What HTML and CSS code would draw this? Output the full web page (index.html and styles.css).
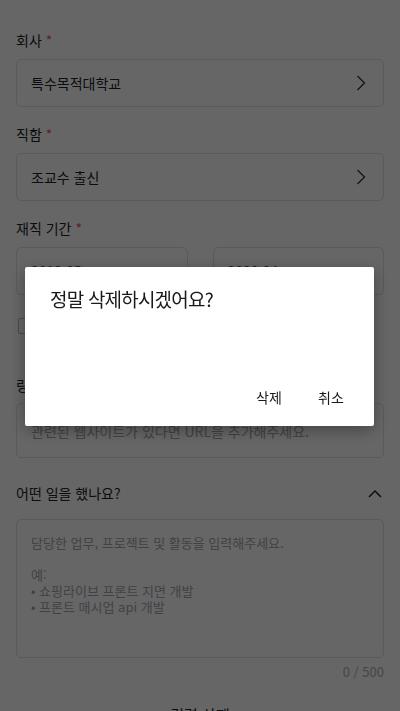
FILE: index.html
```html
<!DOCTYPE html>
<html lang="ko">
<head>
  <meta charset="UTF-8">
  <title>경력 편집</title>
  <link rel="stylesheet" href="styles.css">
</head>
<body>
  <!-- 경력 입력 폼 -->
  <div class="page">
    <div class="field">
      <div class="label">회사 <span class="req">*</span></div>
      <div class="select-box">
        <span>특수목적대학교</span>
        <svg class="chev" width="10" height="16" viewBox="0 0 10 16"><path d="M1.5 1 L8.5 8 L1.5 15" fill="none" stroke="#333" stroke-width="1.3"/></svg>
      </div>
    </div>

    <div class="field">
      <div class="label">직함 <span class="req">*</span></div>
      <div class="select-box">
        <span>조교수 출신</span>
        <svg class="chev" width="10" height="16" viewBox="0 0 10 16"><path d="M1.5 1 L8.5 8 L1.5 15" fill="none" stroke="#333" stroke-width="1.3"/></svg>
      </div>
    </div>

    <div class="field">
      <div class="label">재직 기간 <span class="req">*</span></div>
      <div class="date-row">
        <div class="date-box">2019.05</div>
        <div class="date-box">2020.04</div>
      </div>
      <div class="check-row">
        <span class="checkbox"></span>
        <span>재직 중</span>
      </div>
    </div>

    <div class="field link-field">
      <div class="label">링크</div>
      <div class="link-box">관련된 웹사이트가 있다면 URL을 추가해주세요.</div>
    </div>

    <div class="section-head">
      <span>어떤 일을 했나요?</span>
      <svg width="14" height="9" viewBox="0 0 14 9"><path d="M1 8 L7 2 L13 8" fill="none" stroke="#222" stroke-width="1.5"/></svg>
    </div>
    <div class="textarea">
      <p>담당한 업무, 프로젝트 및 활동을 입력해주세요.</p>
      <p class="blank">&nbsp;</p>
      <p>예:</p>
      <p>• 쇼핑라이브 프론트 지면 개발</p>
      <p>• 프론트 매시업 api 개발</p>
    </div>
    <div class="counter">0 / 500</div>

    <div class="delete-link">경력 삭제</div>
  </div>

  <!-- 삭제 확인 다이얼로그 -->
  <div class="dim">
    <div class="dialog">
      <div class="dialog-title">정말 삭제하시겠어요?</div>
      <div class="dialog-actions">
        <button class="dialog-btn">삭제</button>
        <button class="dialog-btn">취소</button>
      </div>
    </div>
  </div>
</body>
</html>
```

FILE: styles.css
```css
/* 기본 */
body {
  margin: 0;
  font-family: "Noto Sans CJK KR", "Noto Sans", sans-serif;
  background-color: #fff;
  color: #222;
}
.page {
  padding: 30px 16px 40px;
}
.field {
  margin-bottom: 17px;
}
.label {
  font-size: 14px;
  line-height: 20px;
  margin-bottom: 9px;
}
.req {
  color: #ee5555;
}
/* 선택 박스 */
.select-box {
  height: 48px;
  box-sizing: border-box;
  border: 1px solid #e1e1e1;
  border-radius: 5px;
  display: flex;
  align-items: center;
  justify-content: space-between;
  padding: 0 17px 0 14px;
  font-size: 14px;
}
/* 기간 */
.date-row {
  display: grid;
  grid-template-columns: 1fr 1fr;
  gap: 25px;
}
.date-box {
  height: 48px;
  box-sizing: border-box;
  border: 1px solid #e1e1e1;
  border-radius: 5px;
  display: flex;
  align-items: center;
  padding-left: 14px;
  font-size: 14px;
  color: #555;
}
.check-row {
  display: flex;
  align-items: center;
  gap: 8px;
  margin-top: 21px;
  padding-left: 2px;
  font-size: 14px;
}
.checkbox {
  width: 14px;
  height: 14px;
  border: 1px solid #bbb;
  border-radius: 2px;
}
.link-field {
  margin-top: 39px;
}
.link-field .label {
  margin-bottom: 8px;
}
.link-box {
  height: 55px;
  box-sizing: border-box;
  border: 1px solid #e1e1e1;
  border-radius: 5px;
  display: flex;
  align-items: center;
  padding-left: 14px;
  font-size: 14px;
  color: #a0a6b0;
}
/* 업무 내용 */
.section-head {
  display: flex;
  justify-content: space-between;
  align-items: center;
  height: 24px;
  margin-top: 23px;
  font-size: 14px;
  padding-right: 2px;
}
.textarea {
  margin-top: 14px;
  height: 139px;
  box-sizing: border-box;
  border: 1px solid #e1e1e1;
  border-radius: 5px;
  padding: 15px 14px;
  font-size: 13px;
  line-height: 16px;
  color: #a0a6b0;
}
.textarea p {
  margin: 0;
}
.counter {
  text-align: right;
  font-size: 13px;
  line-height: 18px;
  margin-top: 5px;
  color: #b0b0b0;
}
.delete-link {
  text-align: center;
  font-size: 15px;
  margin-top: 23px;
}
/* 다이얼로그 */
.dim {
  position: fixed;
  top: 0;
  left: 0;
  right: 0;
  bottom: 0;
  background-color: rgba(0, 0, 0, 0.6);
  display: flex;
  align-items: center;
  padding-bottom: 18px;
}
.dialog {
  flex: 1;
  margin: 0 26px 0 25px;
  background-color: #fff;
  border-radius: 2px;
  box-shadow: 0 4px 16px rgba(0, 0, 0, 0.35);
  padding: 20px 12px 11px 25px;
}
.dialog-title {
  font-size: 19px;
  line-height: 24px;
  letter-spacing: -0.8px;
  color: #1a1a1a;
}
.dialog-actions {
  display: flex;
  justify-content: flex-end;
  margin-top: 68px;
}
.dialog-btn {
  background: none;
  border: none;
  font-family: inherit;
  font-size: 14px;
  color: #1a1a1a;
  width: 62px;
  height: 36px;
  padding: 0;
}
```
